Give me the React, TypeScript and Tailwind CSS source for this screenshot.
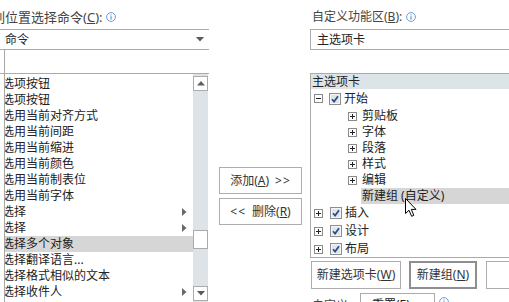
import React from 'react';

const font = "font-['Noto_Sans','Noto_Sans_CJK_SC',sans-serif]";

function InfoIcon() {
  return (
    <svg width="10" height="10" viewBox="0 0 10 10" className="shrink-0">
      <circle cx="5" cy="5" r="4.4" fill="none" stroke="#6f9dd3" strokeWidth="1" />
      <rect x="4.5" y="4.2" width="1" height="3.4" fill="#4a7fc1" />
      <rect x="4.5" y="2.4" width="1" height="1" fill="#4a7fc1" />
    </svg>
  );
}

function Expander({ open }: { open?: boolean }) {
  return (
    <svg width="9" height="9" viewBox="0 0 9 9" className="shrink-0">
      <rect x="0.5" y="0.5" width="8" height="8" fill="white" stroke="#8a8a8a" />
      <rect x="2" y="4" width="5" height="1" fill="#222" />
      {!open && <rect x="4" y="2" width="1" height="5" fill="#222" />}
    </svg>
  );
}

function Check() {
  return (
    <svg width="12" height="12" viewBox="0 0 12 12" className="shrink-0">
      <rect x="0.5" y="0.5" width="11" height="11" fill="#f3f5f7" stroke="#8e8e8e" />
      <rect x="2" y="2" width="8" height="8" fill="#dde5ee" />
      <path d="M3 6.2 L5.1 8.6 L9 3.2" fill="none" stroke="#2d4c80" strokeWidth="1.7" />
    </svg>
  );
}

function TriDown() {
  return (
    <svg width="8" height="5" viewBox="0 0 8 5" className="shrink-0">
      <path d="M0 0 L8 0 L4 4.5 Z" fill="#5a5a5a" />
    </svg>
  );
}

function TriUp() {
  return (
    <svg width="8" height="5" viewBox="0 0 8 5" className="shrink-0">
      <path d="M0 4.5 L8 4.5 L4 0 Z" fill="#606060" />
    </svg>
  );
}

function TriRight() {
  return (
    <svg width="5" height="8" viewBox="0 0 5 8" className="shrink-0">
      <path d="M0 0 L4.5 4 L0 8 Z" fill="#6a6a6a" />
    </svg>
  );
}

function Cursor() {
  return (
    <svg width="13" height="20" viewBox="0 0 13 20" className="absolute left-[405px] top-[198px]">
      <path
        d="M0.5 0.5 L0.5 15.5 L4 12.2 L6.6 18.3 L8.8 17.3 L6.3 11.4 L11 11.4 Z"
        fill="white"
        stroke="black"
        strokeWidth="1"
      />
    </svg>
  );
}

const commands: { label: string; sub?: boolean; selected?: boolean }[] = [
  { label: '选项按钮' },
  { label: '选项按钮' },
  { label: '选用当前对齐方式' },
  { label: '选用当前间距' },
  { label: '选用当前缩进' },
  { label: '选用当前颜色' },
  { label: '选用当前制表位' },
  { label: '选用当前字体' },
  { label: '选择', sub: true },
  { label: '选择', sub: true },
  { label: '选择多个对象', selected: true },
  { label: '选择翻译语言...' },
  { label: '选择格式相似的文本' },
  { label: '选择收件人', sub: true },
];

const groups = ['剪贴板', '字体', '段落', '样式', '编辑'];

export default function App() {
  return (
    <div className={`relative w-[509px] h-[302px] overflow-hidden bg-white flex text-[12px] text-[#222] ${font}`}>
      {/* Left: command list */}
      <div className="w-[209px] shrink-0 overflow-hidden">
        <div className="mt-[9px] h-[16px] -ml-[34px] flex items-center gap-[3px] whitespace-nowrap text-[13px] text-[#444] leading-[16px]">
          <span>
            从下列位置选择命令(<span className="underline">C</span>):
          </span>
          <InfoIcon />
        </div>
        <div className="mt-[4px] -ml-[40px] w-[250px] h-[21px] border border-[#ababab] flex items-center justify-between pr-[5px]">
          <div className="ml-[43px] overflow-hidden">
            <span className="block -ml-[23px] whitespace-nowrap">常用命令</span>
          </div>
          <TriDown />
        </div>
        <div className="ml-[4px] h-[252px] border-l border-[#a6a6a6] pt-[23px]">
          <div className="-ml-[5px] w-[210px] h-[235px] border-t border-r border-[#ababab] flex">
            <div className="ml-[5px] w-[188px] overflow-hidden pt-[2px]">
              {commands.map((c, i) => (
                <div
                  key={i}
                  className={`h-[16px] leading-[16px] flex items-center justify-between pr-[6px] whitespace-nowrap ${
                    c.selected ? 'bg-[#d6d6d6]' : ''
                  }`}
                >
                  <span className="-ml-[3px]">{c.label}</span>
                  {c.sub && <TriRight />}
                </div>
              ))}
            </div>
            <div className="w-[15px] bg-[#dde3e6] flex flex-col">
              <div className="mt-[2px] h-[15px] border border-[#ababab] bg-white flex items-center justify-center">
                <TriUp />
              </div>
              <div className="mt-[139px] h-[19px] border border-[#ababab] bg-white" />
              <div className="mt-[37px] h-[15px] border border-[#ababab] bg-white flex items-center justify-center">
                <TriDown />
              </div>
            </div>
          </div>
        </div>
      </div>

      {/* Middle: add / remove */}
      <div className="w-[101px] shrink-0 pl-[10px] pt-[167px]">
        <div className="w-[83px] h-[27px] border border-[#adadad] flex items-center justify-center gap-[6px] text-[#333] whitespace-nowrap">
          <span>
            添加(<span className="underline">A</span>)
          </span>
          <span className="tracking-[1px]">&gt;&gt;</span>
        </div>
        <div className="mt-[4px] w-[83px] h-[27px] border border-[#adadad] flex items-center justify-center gap-[6px] text-[#333] whitespace-nowrap">
          <span className="tracking-[1px]">&lt;&lt;</span>
          <span>
            删除(<span className="underline">R</span>)
          </span>
        </div>
      </div>

      {/* Right: ribbon tree */}
      <div className="w-[230px] shrink-0">
        <div className="mt-[9px] h-[16px] pl-[2px] flex items-center gap-[4px] whitespace-nowrap text-[#444] leading-[16px]">
          <span>
            自定义功能区(<span className="underline">B</span>):
          </span>
          <InfoIcon />
        </div>
        <div className="mt-[4px] w-[230px] h-[21px] border border-[#ababab] pl-[6px] flex items-center whitespace-nowrap">
          主选项卡
        </div>
        <div className="mt-[23px] w-[230px] h-[185px] border border-[#ababab] overflow-hidden">
          <div className="h-[15px] leading-[15px] bg-[#dde4e8] pl-[1px] whitespace-nowrap">主选项卡</div>
          <div className="h-[19px] flex items-center pl-[3px] whitespace-nowrap">
            <Expander open />
            <span className="ml-[6px]">
              <Check />
            </span>
            <span className="ml-[3px]">开始</span>
          </div>
          {groups.map((g) => (
            <div key={g} className="h-[16px] flex items-center pl-[37px] whitespace-nowrap">
              <Expander />
              <span className="ml-[5px]">{g}</span>
            </div>
          ))}
          <div className="h-[16px] leading-[16px] ml-[50px] pl-[1px] bg-[#d6d6d6] whitespace-nowrap">新建组 (自定义)</div>
          {['插入', '设计', '布局'].map((t) => (
            <div key={t} className="h-[18px] flex items-center pl-[3px] whitespace-nowrap">
              <Expander />
              <span className="ml-[7px]">
                <Check />
              </span>
              <span className="ml-[3px]">{t}</span>
            </div>
          ))}
        </div>
        <div className="mt-[3px] flex pl-[1px]">
          <div className="w-[100px] h-[28px] border border-[#adadad] flex items-center justify-center text-[#333] whitespace-nowrap">
            新建选项卡(<span className="underline">W</span>)
          </div>
          <div className="ml-[8px] w-[75px] h-[28px] border-2 border-[#8f8f8f] flex items-center justify-center text-[#333] whitespace-nowrap">
            新建组(<span className="underline">N</span>)
          </div>
          <div className="ml-[9px] w-[60px] h-[28px] border border-[#adadad]" />
        </div>
        <div className="mt-[4px] flex items-start pl-[2px] whitespace-nowrap text-[#444]">
          <span className="mt-[4px] w-[48px]">自定义:</span>
          <div className="w-[75px] h-[22px] border border-[#ababab] pl-[11px] pt-[2px] text-[#222]">重置(E) ▾</div>
          <span className="ml-[4px] mt-[4px]">
            <InfoIcon />
          </span>
        </div>
      </div>

      <Cursor />
    </div>
  );
}
